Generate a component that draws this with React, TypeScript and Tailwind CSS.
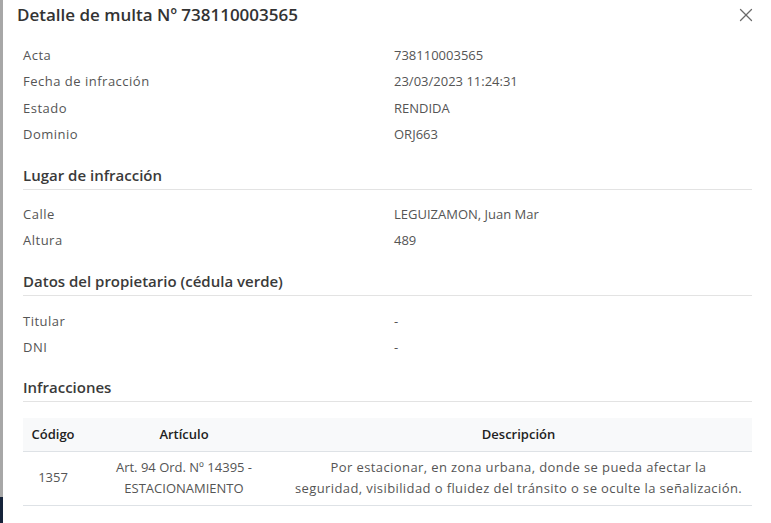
import React from 'react';
import { X } from 'lucide-react';

const font = { fontFamily: '"Open Sans", "Noto Sans", sans-serif' };

type Row = { label: string; value: string };

const general: Row[] = [
  { label: 'Acta', value: '738110003565' },
  { label: 'Fecha de infracción', value: '23/03/2023 11:24:31' },
  { label: 'Estado', value: 'RENDIDA' },
  { label: 'Dominio', value: 'ORJ663' },
];

const lugar: Row[] = [
  { label: 'Calle', value: 'LEGUIZAMON, Juan Mar' },
  { label: 'Altura', value: '489' },
];

const propietario: Row[] = [
  { label: 'Titular', value: '-' },
  { label: 'DNI', value: '-' },
];

function InfoRows({ rows }: { rows: Row[] }) {
  return (
    <div>
      {rows.map((r) => (
        <div key={r.label} className="flex h-[26.5px] items-center text-[13px] text-[#555]">
          <span className="w-[371px] tracking-[0.5px]">{r.label}</span>
          <span>{r.value}</span>
        </div>
      ))}
    </div>
  );
}

function SectionTitle({ children, className = '' }: { children: React.ReactNode; className?: string }) {
  return (
    <div className={`border-b border-[#e3e3e3] pb-[4px] text-[15px] font-semibold leading-[20px] text-[#3a3a3a] ${className}`}>
      {children}
    </div>
  );
}

export default function App() {
  return (
    <div className="flex h-[523px] w-[771px] overflow-hidden bg-white" style={font}>
      {/* Page behind the modal */}
      <div className="flex w-[3px] flex-col bg-[#a7a7a7]">
        <div className="flex-1" />
        <div className="h-[26px] bg-[#16233a]" />
      </div>

      {/* Modal */}
      <div className="flex-1 bg-white">
        {/* Header */}
        <div className="flex h-[29px] items-center justify-between pl-[14px] pr-[14px]">
          <h2 className="text-[17px] font-semibold text-[#333]">Detalle de multa Nº 738110003565</h2>
          <X className="h-[22px] w-[22px] text-[#6b6b6b]" strokeWidth={1.4} />
        </div>

        {/* Body */}
        <div className="pl-[20px] pr-[19px]">
          <div className="mt-[13px]">
            <InfoRows rows={general} />
          </div>

          <SectionTitle className="mt-[17px]">Lugar de infracción</SectionTitle>
          <div className="mt-[11px]">
            <InfoRows rows={lugar} />
          </div>

          <SectionTitle className="mt-[17px]">Datos del propietario (cédula verde)</SectionTitle>
          <div className="mt-[12px]">
            <InfoRows rows={propietario} />
          </div>

          <SectionTitle className="mt-[16px]">Infracciones</SectionTitle>

          {/* Table */}
          <table className="mt-[16px] w-full border-collapse text-[13px]">
            <thead>
              <tr className="h-[33px] border-b border-[#dee2e6] bg-[#f8f9fa] text-[13px] font-semibold text-[#222]">
                <th className="w-[60px] text-center font-semibold">Código</th>
                <th className="w-[202px] text-center font-semibold">Artículo</th>
                <th className="text-center font-semibold">Descripción</th>
              </tr>
            </thead>
            <tbody>
              <tr className="h-[54px] border-b border-[#dee2e6] text-[#555]">
                <td className="text-center">1357</td>
                <td className="text-center leading-[21px]">
                  Art. 94 Ord. Nº 14395 -<br />ESTACIONAMIENTO
                </td>
                <td className="text-center leading-[21px] tracking-[0.4px]">
                  Por estacionar, en zona urbana, donde se pueda afectar la
                  <br />
                  seguridad, visibilidad o fluidez del tránsito o se oculte la señalización.
                </td>
              </tr>
            </tbody>
          </table>
        </div>
      </div>
    </div>
  );
}
